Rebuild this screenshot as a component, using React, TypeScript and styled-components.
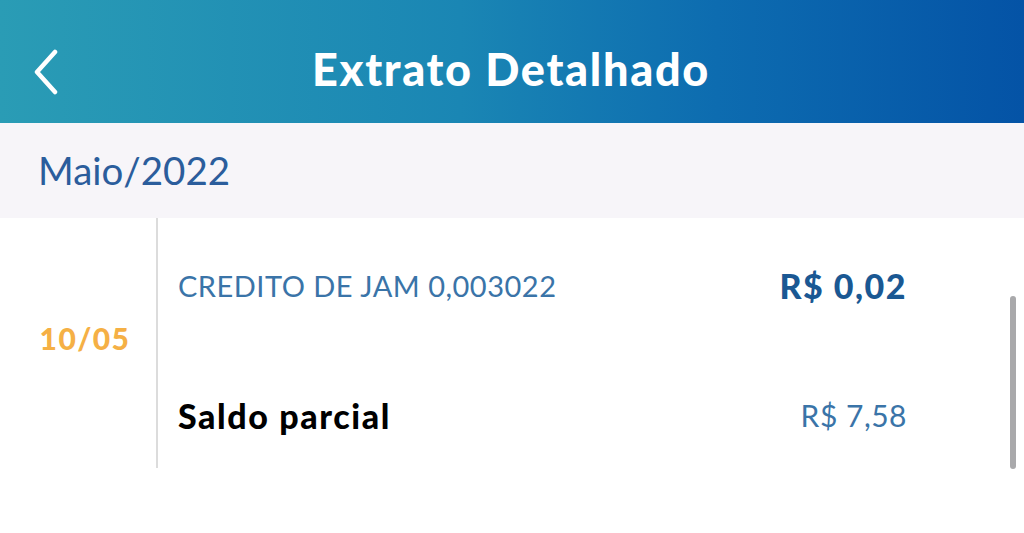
import React from "react";
import styled, { createGlobalStyle } from "styled-components";

const Global = createGlobalStyle`
  html, body { margin: 0; padding: 0; background: #ffffff; }
  body { font-family: "Lato", "Noto Sans", sans-serif; overflow: hidden; }
  * { box-sizing: border-box; }
`;

const Page = styled.div`
  width: 1024px;
  height: 533px;
  display: flex;
  flex-direction: column;
  position: relative;
  background: #ffffff;
`;

const Header = styled.header`
  height: 123px;
  display: flex;
  align-items: center;
  justify-content: center;
  position: relative;
  background: linear-gradient(90deg, #2a9cb5 0%, #1a86b4 45%, #0d6cb0 70%, #0453a6 100%);
`;

const BackButton = styled.button`
  position: absolute;
  left: 30px;
  top: 48px;
  width: 32px;
  height: 48px;
  padding: 0;
  border: none;
  background: transparent;
  display: flex;
  align-items: center;
  justify-content: center;
`;

const Title = styled.h1`
  margin: 0;
  color: #ffffff;
  font-family: "Lato", sans-serif;
  font-weight: 900;
  font-size: 45px;
  letter-spacing: 1.7px;
  transform: translate(-1px, 7px);
`;

const MonthBar = styled.div`
  height: 95px;
  background: #f7f5f9;
  display: flex;
  align-items: center;
  padding-left: 38px;
  padding-bottom: 2px;
`;

const MonthLabel = styled.span`
  color: #2b5d9c;
  font-family: "Lato", sans-serif;
  font-weight: 400;
  font-size: 38.5px;
`;

const Entry = styled.div`
  display: flex;
  height: 250px;
`;

const DateCol = styled.div`
  width: 158px;
  border-right: 2px solid #dcdcdc;
  display: flex;
  align-items: center;
  justify-content: center;
  padding-left: 14px;
  padding-bottom: 10px;
`;

const DateText = styled.span`
  color: #f5b045;
  font-family: "Lato", sans-serif;
  font-weight: 900;
  font-size: 30px;
  letter-spacing: 1.4px;
`;

const Lines = styled.div`
  flex: 1;
  display: flex;
  flex-direction: column;
  padding: 42px 117px 0 20px;
  gap: 80px;
`;

const Row = styled.div`
  display: flex;
  justify-content: space-between;
  align-items: center;
  height: 50px;
`;

const Label = styled.span<{ $strong?: boolean }>`
  font-family: "Lato", sans-serif;
  font-size: ${(p) => (p.$strong ? "34px" : "29px")};
  font-weight: ${(p) => (p.$strong ? 900 : 400)};
  color: ${(p) => (p.$strong ? "#000000" : "#3a74a8")};
  letter-spacing: ${(p) => (p.$strong ? "1.6px" : "0.5px")};
`;

const Amount = styled.span<{ $strong?: boolean }>`
  font-family: "Lato", sans-serif;
  font-size: ${(p) => (p.$strong ? "34px" : "30px")};
  font-weight: ${(p) => (p.$strong ? 900 : 400)};
  color: ${(p) => (p.$strong ? "#1a5893" : "#3a74a8")};
  letter-spacing: ${(p) => (p.$strong ? "1.5px" : "0.5px")};
`;

const Scrollbar = styled.div`
  position: absolute;
  right: 8px;
  top: 296px;
  width: 6px;
  height: 173px;
  border-radius: 3px;
  background: #a9a9ab;
`;

export default function App() {
  return (
    <>
      <Global />
      <Page>
        <Header>
          <BackButton aria-label="Voltar">
            <svg width="30" height="46" viewBox="0 0 30 46" fill="none">
              <path d="M24 3 L6 23 L24 43" stroke="#ffffff" strokeWidth="4.5" strokeLinecap="round" strokeLinejoin="round" />
            </svg>
          </BackButton>
          <Title>Extrato Detalhado</Title>
        </Header>
        <MonthBar>
          <MonthLabel>Maio/2022</MonthLabel>
        </MonthBar>
        <Entry>
          <DateCol>
            <DateText>10/05</DateText>
          </DateCol>
          <Lines>
            <Row>
              <Label>CREDITO DE JAM 0,003022</Label>
              <Amount $strong>R$ 0,02</Amount>
            </Row>
            <Row>
              <Label $strong>Saldo parcial</Label>
              <Amount>R$ 7,58</Amount>
            </Row>
          </Lines>
        </Entry>
        <Scrollbar />
      </Page>
    </>
  );
}
